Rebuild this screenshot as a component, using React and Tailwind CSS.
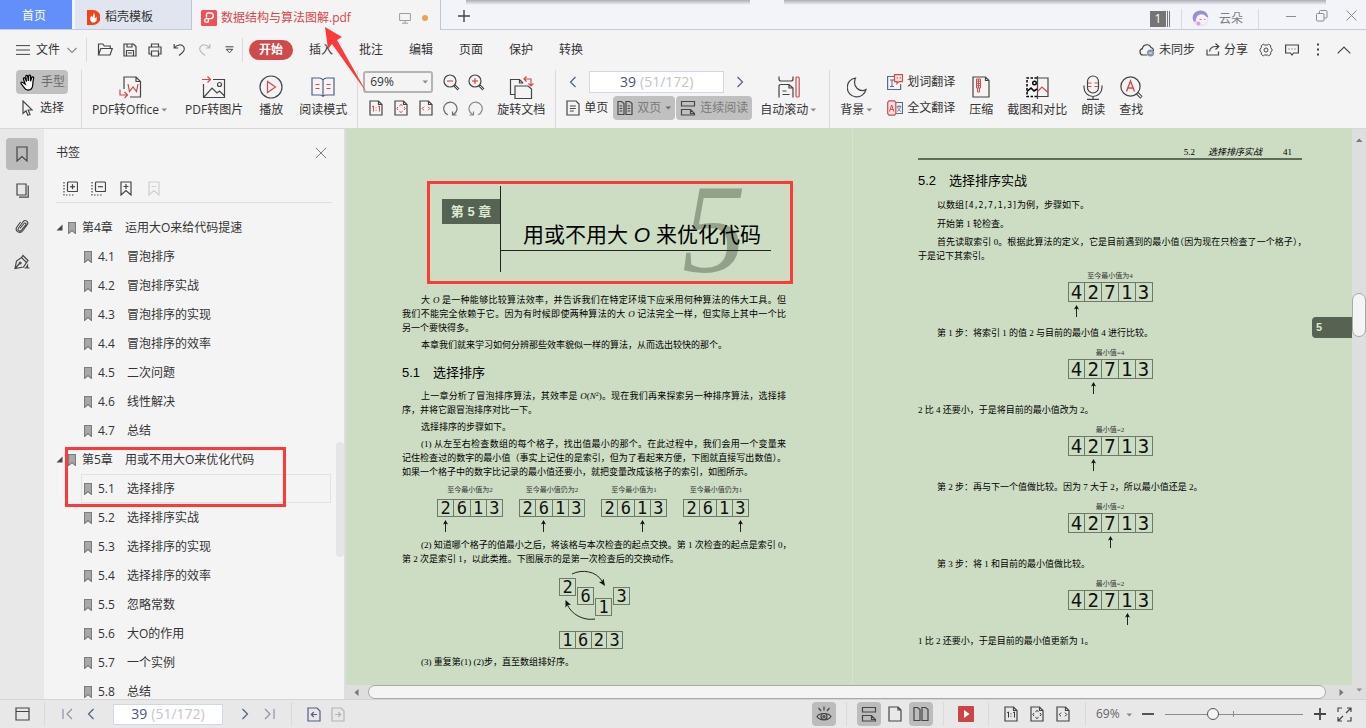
import React from "react";
import clsx from "clsx";

/* ---------- icon helpers ---------- */

const Svg = ({ w = 16, h = 16, className = "text-[#454545]", children }) => (
  <svg
    width={w}
    height={h}
    viewBox={`0 0 ${w} ${h}`}
    fill="none"
    stroke="currentColor"
    strokeWidth="1.2"
    className={clsx("shrink-0", className)}
    aria-hidden="true"
  >
    {children}
  </svg>
);

const RED = "#d34a4a";

const Caret = ({ className = "text-[#8a8a8a]" }) => (
  <Svg w={7} h={4} className={className}>
    <path d="M0.5 0.5h5.6L3.3 3.6z" fill="currentColor" stroke="none" />
  </Svg>
);

const Chevron = ({ dir, className }) => (
  <Svg w={12} h={12} className={className || "text-[#4f5f86]"}>
    {dir === "left" && <path d="M8.5 1 3.5 6l5 5" />}
    {dir === "right" && <path d="M3.5 1l5 5-5 5" />}
    {dir === "down" && <path d="M1.5 4 6 8.5 10.5 4" />}
  </Svg>
);

// page with a folded corner, used by all the zoom-fit buttons
const FitIcon = ({ kind, color = RED }) => (
  <Svg w={14} h={16} className="text-[#454545]">
    <path d="M1 1h8.5L13 4.5V15H1zM9.5 1v3.5H13" />
    {kind === "actual" && (
      <path d="M3.2 6.6 4.5 6v5.5M9.2 6.6l1.3-.6v5.5M7 7.4v.9M7 9.8v.9" stroke={color} strokeWidth="1" />
    )}
    {kind === "page" && (
      <path d="M5.4 5.8 7 4.5l1.6 1.3M5.4 11.2 7 12.5l1.6-1.3M4 7 2.9 8.5 4 10M10 7l1.1 1.5L10 10" stroke={color} strokeWidth="1" />
    )}
    {kind === "width" && <path d="M5 6.7 3.2 8.5 5 10.3M9 6.7l1.8 1.8L9 10.3" stroke={color} strokeWidth="1" />}
  </Svg>
);

const SinglePage = () => (
  <Svg w={14} h={16}>
    <path d="M1 1h9l3 3v11H1zM3.8 6h6M3.8 8.5h6M3.8 11h4" />
  </Svg>
);

const DoublePage = ({ plain }) => (
  <Svg w={16} h={16}>
    <path d="M1 1.5h3.5l2.5 2v11H1zM9 1.5h3.5l2.5 2v11H9z" />
    {!plain && <path d="M2.6 6h2.6M2.6 8.5h2.6M2.6 11h2.6M10.6 6h2.6M10.6 8.5h2.6M10.6 11h2.6" strokeWidth="1" />}
  </Svg>
);

const Continuous = () => (
  <Svg w={16} h={16}>
    <path d="M1.5 1.5h13v4.5h-13zM1.5 15.5V9.5h9l4 4v2M10.5 9.5v4h4M1.5 15h13" />
  </Svg>
);

const BookmarkGlyph = () => (
  <Svg w={8} h={12} className="text-[#7d7d7d]">
    <path d="M.5.5h7v11L4 8.5.5 11.5z" fill="#a9a9a9" />
  </Svg>
);

const Sep = ({ className }) => <div className={clsx("w-px bg-[#dadada] shrink-0", className)} />;

const IconButton = ({ label, active, className, children }) => (
  <button
    type="button"
    aria-label={label}
    className={clsx(
      "h-6 shrink-0 flex items-center justify-center rounded",
      active && "bg-[#bcbcbc]",
      className || "w-6"
    )}
  >
    {children}
  </button>
);

const BigButton = ({ label, caret, children }) => (
  <button type="button" className="flex flex-col items-center shrink-0 pt-1 whitespace-nowrap">
    <span className="h-[26px] flex items-center justify-center">{children}</span>
    <span className="mt-[2px] leading-4 flex items-center gap-[2px]">
      {label}
      {caret && <Caret />}
    </span>
  </button>
);

const PageBox = ({ className }) => (
  <label
    className={clsx(
      "bg-white border border-[#cfd8e8] flex items-center justify-center gap-1 text-sm shrink-0",
      className
    )}
  >
    <input aria-label="页码" defaultValue="39" className="w-4 text-[#45557d] bg-transparent outline-none" />
    <span className="text-[#c4c4c8]">(51/172)</span>
  </label>
);

/* ---------- title bar ---------- */

const TitleBar = () => (
  <div className="relative flex h-[30px] bg-[#f3f4f9] border-b border-[#c3cade] shrink-0">
    {/* shadows cast by the windows above */}
    <div className="absolute left-[466px] w-[284px] top-0 h-[5px] bg-gradient-to-b from-[#adaeb3] to-transparent" />
    <div className="absolute left-[784px] right-[40px] top-0 h-[5px] bg-gradient-to-b from-[#adaeb3] to-transparent" />
    <button type="button" className="w-[72px] h-[29px] bg-[#628ffa] text-white pr-1 pt-[3px]">首页</button>
    <button type="button" className="ml-[3px] w-[116px] bg-[#e1e5ef] flex items-center pl-3 gap-[5px] pt-[5px]">
      <Svg w={13} h={15} className="">
        <path d="M0 0h6a7.5 7.5 0 0 1 0 15H0z" fill="#f4431c" stroke="none" />
        <path d="M6.6 2.5c.5 2.5-1.3 3.4-.9 5C4.9 7 4.5 6.3 4.4 5.6 2.5 8 2.7 11 5.3 12.5c4 .6 5.4-2.8 4-6-.4 1-1 1.5-1.7 1.8C8.3 6 8 4 6.6 2.5z" fill="#fff" stroke="none" />
      </Svg>
      稻壳模板
    </button>
    <div className="h-[30px] w-[250px] bg-[#f4f4f4] border-x border-[#bcc5da] flex items-center pl-[9px] pt-[5px]">
      <Svg w={16} h={16} className="">
        <rect width="16" height="16" rx="1.5" fill="#ee5156" stroke="none" />
        <path d="M5.5 7.5V4.5A1.5 1.5 0 0 1 7 3h2.5a2.7 2.7 0 0 1 0 5.600H5.500a1.900 1.900 0 1 0 1.900 1.900V8.700" stroke="#fff" strokeWidth="1.4" />
      </Svg>
      <span className="ml-1 text-[#d8464a] whitespace-nowrap">数据结构与算法图解.pdf</span>
      <Svg w={12} h={12} className="ml-auto text-[#9c9c9c]">
        <path d="M.6 1.5h10.8v7H.6zM6 8.5v2.5M3 11.2h6" strokeWidth="1" />
      </Svg>
      <span className="ml-[11px] mr-3 size-[6px] rounded-full bg-[#e9a15c]" />
    </div>
    <button type="button" aria-label="新建标签" className="w-[46px] flex items-center justify-center pt-[3px]">
      <Svg w={12} h={12}><path d="M6 0v12M0 6h12" strokeWidth="1.4" /></Svg>
    </button>

    <div className="ml-auto flex items-center text-[#7b7f88] pt-2">
      <span className="w-4 h-4 bg-[#757575] text-white text-center leading-4">1</span>
      <span className="ml-px w-[3px] h-4 border-x border-[#757575]" />
      <Sep className="h-5 ml-[11px] bg-[#cdcfd6]" />
      <Svg w={17} h={17} className="ml-[10px]">
        <circle cx="8.5" cy="8.5" r="8" fill="#e9e3f3" stroke="none" />
        <path d="M.8 9C0 4 4 .5 8.5.5s7.5 3 7.7 7C13 7 12 5 9.5 4.6 6 4.3 4 6 3.5 12 2 11.5 1 10.5.8 9z" fill="#9a8fc9" stroke="none" />
        <circle cx="10" cy="9.5" r="5" fill="#fff4f2" stroke="none" />
        <path d="M7.5 9.5h2M12 9.5h1.5" stroke="#7d6a91" strokeWidth=".8" />
        <circle cx="6.5" cy="13.5" r="2" fill="#e59be0" stroke="none" />
      </Svg>
      <span className="ml-[10px]">云朵</span>
      <Sep className="h-5 ml-[15px] bg-[#cdcfd6]" />
    </div>
    <div className="flex items-center text-[#8b8b93] pl-4 pt-[2px]">
      <IconButton label="最小化" className="w-[31px]">
        <Svg w={10} h={10} className=""><path d="M0 5.5h10" strokeWidth="1" /></Svg>
      </IconButton>
      <IconButton label="还原" className="w-[31px]">
        <Svg w={12} h={12} className="">
          <rect x=".5" y="3.5" width="7.5" height="7.5" rx="1" strokeWidth="1" />
          <path d="M3.5 3.5v-2a1 1 0 0 1 1-1H10a1 1 0 0 1 1 1V7a1 1 0 0 1-1 1H8" strokeWidth="1" />
        </Svg>
      </IconButton>
      <IconButton label="关闭" className="w-[29px]">
        <Svg w={11} h={11} className=""><path d="M.5.5l10 10M10.5.5l-10 10" strokeWidth="1" /></Svg>
      </IconButton>
    </div>
  </div>
);

/* ---------- menu row ---------- */

const menus = ["插入", "批注", "编辑", "页面", "保护", "转换"];

const MenuRow = () => (
  <div className="flex items-center h-[38px] shrink-0 pl-4 pr-[9px] pt-px">
    <button type="button" className="flex items-center gap-[6px]">
      <Svg w={14} h={10}><path d="M0 .6h14M0 5h14M0 9.4h14" strokeWidth="1" /></Svg>
      文件
      <Chevron dir="down" className="text-[#8a8a8a]" />
    </button>
    <Sep className="h-6 ml-2 mr-[5px]" />
    <IconButton label="打开" className="w-[25px]">
      <Svg w={16} h={13}><path d="M1.5 12V1h4.3l1.5 2h6v2.5M1.5 12l2.3-6.5h11.5L13 12z" /></Svg>
    </IconButton>
    <IconButton label="保存" className="w-[25px]">
      <Svg w={14} h={14}><path d="M1 1h9.5L13 3.5V13H1zM4 1v3h5V1M3.5 13V7.5h7V13M5 10h4" /></Svg>
    </IconButton>
    <IconButton label="打印" className="w-[25px]">
      <Svg w={14} h={14}><path d="M3.5 4V1h7v3M3.5 11H1V4h12v7h-2.5M3.5 8h7v5h-7zM10.2 6h1" /></Svg>
    </IconButton>
    <IconButton label="撤销" className="w-[25px]">
      <Svg w={13} h={13}><path d="M1.2 1v4h4M1.4 4.8C4 1.5 8.5 1 10.5 3.5c2.5 3.5-1 6.5-4.5 9" /></Svg>
    </IconButton>
    <IconButton label="重做" className="w-[25px]">
      <Svg w={13} h={13} className="text-[#b9b9b9]"><path d="M11.8 1v4h-4M11.6 4.8C9 1.5 4.5 1 2.5 3.5c-2.5 3.5 1 6.5 4.5 9" /></Svg>
    </IconButton>
    <IconButton label="更多" className="w-[25px]">
      <Svg w={9} h={8}><path d="M.5.8h8M1.2 3.3h6.6L4.5 6.8z" strokeWidth="1" /></Svg>
    </IconButton>
    <Sep className="h-6 mr-[3px]" />
    <nav className="flex">
      <button type="button" className="w-11 h-5 mx-[3px] rounded-full bg-[#cf4b4b] text-white font-bold">开始</button>
      {menus.map((m) => (
        <button key={m} type="button" className="w-[50px] h-5">{m}</button>
      ))}
    </nav>
    <div className="ml-auto flex items-center">
      <button type="button" className="flex items-center gap-1">
        <Svg w={16} h={14}>
          <path d="M8 12H4a3.2 3.2 0 0 1-.6-6.3A4.5 4.5 0 0 1 12 4.500a3.500 3.500 0 0 1 2.500 3.500" />
          <circle cx="11.5" cy="10" r="3.6" fill="#8791a8" stroke="none" />
          <path d="M9.7 10h3.6" stroke="#fff" strokeWidth="1" />
        </Svg>
        未同步
      </button>
      <button type="button" className="flex items-center gap-1 ml-[11px] mr-[5px]">
        <Svg w={14} h={13}><path d="M1 6.5V12h11.5V8.5M3.5 8.5C4 5.5 6 3.5 9.5 3.5h3M9.5.5l3.3 3-3.3 3" /></Svg>
        分享
      </button>
      <IconButton label="设置" className="w-[26px]">
        <Svg w={14} h={14}>
          <path d="M4.3 1.2 5.5 2h3l1.2-.8 2 1.5v1.8L13.3 7l-1.6 2.5v1.8l-2 1.5L8.5 12h-3l-1.2.8-2-1.5V9.5L.7 7l1.6-2.5V2.7z" strokeWidth="1" />
          <circle cx="7" cy="7" r="2" strokeWidth="1" />
        </Svg>
      </IconButton>
      <IconButton label="反馈" className="w-[26px]">
        <Svg w={14} h={12}><path d="M.6 1h12.8v8H8.5L7 11 5.5 9H.6z" /><path d="M3.5 5h1M6.5 5h1M9.5 5h1" /></Svg>
      </IconButton>
      <IconButton label="选项" className="w-[26px]">
        <Svg w={2} h={13}><path d="M0 1.5h2M0 6.5h2M0 11.5h2" strokeWidth="2" /></Svg>
      </IconButton>
      <IconButton label="收起" className="w-[26px]">
        <Svg w={14} h={8}><path d="M.7 7.3 7 1l6.3 6.3" /></Svg>
      </IconButton>
    </div>
  </div>
);

/* ---------- toolbar ---------- */

const Magnifier = ({ plus }) => (
  <Svg w={17} h={17}>
    <circle cx="7" cy="7" r="6" />
    <path d="M4 7h6" stroke={RED} />
    {plus && <path d="M7 4v6" stroke={RED} />}
    <path d="M11.5 11.5l4 4" strokeWidth="2.6" />
    <path d="M12 12l3.5 3.5" stroke="#f4f4f4" strokeWidth=".8" />
  </Svg>
);

const Toolbar = () => (
  <div className="flex h-[60px] shrink-0 pl-4 pt-[2px] overflow-hidden">
    <div className="flex flex-col gap-[2px] w-[52px]">
      <button type="button" className="h-6 rounded bg-[#c0c0c0] text-[#6b6b6b] flex items-center gap-1 pl-1">
        <Svg w={17} h={17} className="text-black">
          <path d="M5.2 10 3.5 5.2c-.4-1.3 1.3-1.9 1.8-.6L6.5 7.5 5.8 2.5c-.1-1.4 1.7-1.6 1.9-.2L8.4 7l.4-5c.1-1.3 1.9-1.2 1.8.1L10.5 7.2l1.3-3.7c.5-1.2 2.1-.7 1.8.6-.5 2.5-.9 4.5-.9 7-.1 3-1.9 5-4.7 5-2.5 0-3.5-1.6-4.5-3.3L1.2 9.6C.5 8.3 2 7.5 2.9 8.5z" fill="#fff" />
        </Svg>
        手型
      </button>
      <button type="button" className="h-6 flex items-center gap-[7px] pl-[6px]">
        <Svg w={11} h={16}><path d="M1 1v12.5l3-2.7 1.8 4.4 2.2-.9-1.8-4.3h4z" /></Svg>
        选择
      </button>
    </div>
    <Sep className="h-[58px] ml-[13px] mr-[10px]" />

    <div className="flex gap-4 h-[58px]">
      <div className="flex mr-px">
        <BigButton label="PDF转Office" caret>
          <Svg w={23} h={23}>
            <path d="M5 13V1h12l4.5 4.5V21H11M17 1v4.5h4.5" />
            <path d="M9 8l1.5 7.5L14 11l3.5 4.5L19 8M1 13.5V19h7M5.5 16l3 3-3 3" stroke={RED} />
          </Svg>
        </BigButton>
      </div>
      <BigButton label="PDF转图片">
        <Svg w={24} h={23}>
          <path d="M1.5 8v13.5h21v-18H11M2 21l8-9 5 5 2.5-2 5 5" />
          <circle cx="17.5" cy="8.5" r="2" />
          <path d="M0 3.5h8M5.5.5l3 3-3 3" stroke={RED} />
        </Svg>
      </BigButton>
      <BigButton label="播放">
        <Svg w={24} h={24}><circle cx="12" cy="12" r="11" /><path d="M8.5 6.5v11l8-5.5z" stroke={RED} /></Svg>
      </BigButton>
      <BigButton label="阅读模式">
        <Svg w={24} h={20} className="text-[#4f5f86]">
          <path d="M12 3C11 1.5 9.5 1 8 1H1v17h7.5c1.5 0 2.5.3 3.5 1.3 1-1 2-1.3 3.5-1.3H23V1h-7c-1.5 0-3 .5-4 2zM12 3v16" />
          <path d="M4.5 7.5h4M4.5 11.5h4M15.5 7.5h4M15.5 11.5h4" stroke={RED} />
        </Svg>
      </BigButton>
    </div>
    <Sep className="h-[58px] ml-[10px] mr-[5px]" />

    <div className="flex flex-col gap-[2px]">
      <div className="flex items-center h-6">
        <div className="relative w-[70px] h-[22px]">
          <select aria-label="缩放" className="appearance-none w-full h-full rounded-[3px] border-2 border-[#b4b4b4] bg-[#f4f4f4] pl-[5px] text-xs">
            <option>69%</option>
          </select>
          <span className="absolute right-1 top-[9px] pointer-events-none"><Caret /></span>
        </div>
        <IconButton label="缩小" className="w-[25px] ml-[6px]"><Magnifier /></IconButton>
        <IconButton label="放大" className="w-[25px]"><Magnifier plus /></IconButton>
      </div>
      <div className="flex">
        <IconButton label="实际大小" className="w-[25px]"><FitIcon kind="actual" /></IconButton>
        <IconButton label="适合页面" className="w-[25px]"><FitIcon kind="page" /></IconButton>
        <IconButton label="适合宽度" className="w-[25px]"><FitIcon kind="width" /></IconButton>
        <IconButton label="顺时针旋转" className="w-[25px]">
          <Svg w={15} h={15} className="text-[#6a6a6a]"><path d="M5 13.8a6.6 6.6 0 1 1 5-.1M9.5 10.5v3.5h4" /></Svg>
        </IconButton>
        <IconButton label="逆时针旋转" className="w-[25px]">
          <Svg w={15} h={15} className="text-[#8a8a8a]"><path d="M10 13.8a6.6 6.6 0 1 0-5-.1M5.5 10.5v3.5h-4" /></Svg>
        </IconButton>
      </div>
    </div>
    <div className="flex ml-2 h-[58px]">
      <BigButton label="旋转文档">
        <Svg w={25} h={25}>
          <path d="M6 19.5H1.5v-15h9L14 8" />
          <path d="M6 11h13l3.5 3v9.5H6zM10.5 4.5V8H14" />
          <path d="M15.5 4H22v6M17.5 1.5 15 4l2.5 2.5M19.5 8.5 22 11l2.5-2.5" stroke={RED} />
        </Svg>
      </BigButton>
    </div>
    <Sep className="h-[58px] ml-[10px] mr-[5px]" />

    <div className="flex flex-col gap-[2px]">
      <div className="flex items-center h-6">
        <IconButton label="上一页"><Chevron dir="left" /></IconButton>
        <PageBox className="w-[135px] h-[22px] ml-1 mr-1" />
        <IconButton label="下一页"><Chevron dir="right" /></IconButton>
      </div>
      <div className="flex h-6">
        <button type="button" className="flex items-center gap-1 px-[5px]"><SinglePage />单页</button>
        <button type="button" className="flex items-center gap-1 pl-1 pr-[3px] rounded bg-[#c0c0c0] text-[#7a7a7a]">
          <DoublePage />双页<Caret className="text-[#6a6a6a]" />
        </button>
        <button type="button" className="flex items-center gap-1 px-1 ml-px rounded bg-[#c0c0c0] text-[#7a7a7a]">
          <Continuous />连续阅读
        </button>
      </div>
    </div>
    <div className="flex ml-2 h-[58px]">
      <BigButton label="自动滚动" caret>
        <Svg w={22} h={22}>
          <path d="M1 .5v2.5c0 1 .5 2 2 2h10c1.5 0 2-1 2-2V.5M1 21.5V10.5c0-1.5.5-2 2-2h8l4 3.5v9.5M11 8.5V12h4M4.5 15h4M4.5 18.5h7" />
          <rect x="18" y="1" width="3.2" height="20" rx="1" stroke={RED} />
        </Svg>
      </BigButton>
    </div>
    <Sep className="h-[58px] ml-3 mr-[10px]" />

    <div className="flex gap-[14px] h-[58px]">
      <BigButton label="背景" caret>
        <Svg w={20} h={21}><path d="M8.5 1a9.5 9.5 0 1 0 10.5 11.5C12.5 16 5 9.5 8.5 1z" /></Svg>
      </BigButton>
      <div className="flex flex-col gap-[2px]">
        <button type="button" className="h-6 flex items-center gap-1">
          <Svg w={16} h={16}>
            <path d="M8 2.5H.6v13h13V10" stroke="#5b6a8c" />
            <path d="M3 6h4M3 12.5h4M5 6v6.5" stroke="#5b6a8c" strokeWidth="1" />
            <path d="M7.5.6h8v7H12l-2 2v-2H7.5z" stroke={RED} fill="#fbe3e3" />
            <path d="M9.5 4h1.5M12.5 4H14" stroke={RED} />
          </Svg>
          划词翻译
        </button>
        <button type="button" className="h-6 flex items-center gap-1">
          <Svg w={16} h={16}>
            <path d="M8.5 2.5h7v11h-7" stroke="#5b6a8c" />
            <path d="M9.8 6.5h4.4M12 5v1.5M10 11.5c2-1 3-2.5 3.5-5M10.5 7c.5 2 1.5 3.5 3.5 4.5" stroke="#5b6a8c" strokeWidth=".8" />
            <path d="M2 .8h5.5l1.3 1.7v11l-1.3 1.7H2L.7 13.5v-11z" stroke={RED} fill="#fbe3e3" />
            <path d="M2.5 11.5 4.7 5l2.2 6.5M3.3 9.3h2.9" stroke={RED} strokeWidth="1" />
          </Svg>
          全文翻译
        </button>
      </div>
      <BigButton label="压缩">
        <Svg w={18} h={22}>
          <path d="M1 1h12.5L17 4.5V21H1zM13.5 1v3.5H17" />
          <path d="M4.5 3h4v9h-4zM6.5 3v9M4.5 5.2h4M4.5 7.5h4M4.5 9.7h4M5.5 12v4h2v-4" stroke={RED} strokeWidth="1" />
        </Svg>
      </BigButton>
      <BigButton label="截图和对比">
        <Svg w={23} h={23}>
          <path d="M11 2H1v18.5h10" stroke="#000" strokeDasharray="2.5 1.5" strokeWidth="1.5" />
          <path d="M1 15.5 5 12l3 3 3-2" stroke="#000" strokeWidth="1.6" />
          <circle cx="8.5" cy="7" r="1.8" stroke="#000" strokeWidth="1.4" />
          <path d="M11.5 0v23M11.5 2H22v18.5H11.5" />
          <path d="M11.5 15.5 16 11l6 5.5" stroke={RED} />
        </Svg>
      </BigButton>
      <BigButton label="朗读">
        <Svg w={20} h={25}>
          <rect x="4.5" y="1" width="11" height="17" rx="5.5" />
          <path d="M1 10.5v2a9 9 0 0 0 18 0v-2M10 21.5V24M4 24.3h12" />
          <path d="M5 8h3.5M5 11.5h3.5M11.5 8H15M11.5 11.5H15" stroke={RED} />
        </Svg>
      </BigButton>
      <BigButton label="查找">
        <Svg w={23} h={23}>
          <circle cx="10.5" cy="10.5" r="9.6" />
          <path d="M6.5 15.5 10.5 5l4 10.5M8 12h5" stroke={RED} strokeWidth="1.4" />
          <path d="M17 17l4.5 4.5" strokeWidth="3.2" />
          <path d="M17.7 17.7l3.3 3.3" stroke="#f4f4f4" strokeWidth="1.2" />
        </Svg>
      </BigButton>
    </div>
  </div>
);

/* ---------- sidebar ---------- */

const chapters = [
  {
    no: "第4章",
    title: "运用大O来给代码提速",
    items: [
      ["4.1", "冒泡排序"],
      ["4.2", "冒泡排序实战"],
      ["4.3", "冒泡排序的实现"],
      ["4.4", "冒泡排序的效率"],
      ["4.5", "二次问题"],
      ["4.6", "线性解决"],
      ["4.7", "总结"],
    ],
  },
  {
    no: "第5章",
    title: "用或不用大O来优化代码",
    items: [
      ["5.1", "选择排序"],
      ["5.2", "选择排序实战"],
      ["5.3", "选择排序的实现"],
      ["5.4", "选择排序的效率"],
      ["5.5", "忽略常数"],
      ["5.6", "大O的作用"],
      ["5.7", "一个实例"],
      ["5.8", "总结"],
    ],
  },
];

const Rail = () => (
  <div className="w-11 bg-[#e8e8e8] shrink-0 flex flex-col items-center pt-[9px]">
    <button type="button" aria-label="书签" className="size-8 rounded bg-[#bababa] flex items-center justify-center">
      <Svg w={12} h={16}><path d="M1 1h10v14l-5-4.5L1 15z" /></Svg>
    </button>
    <button type="button" aria-label="缩略图" className="w-8 h-9 mt-[2px] flex items-center justify-center">
      <Svg w={13} h={15}><path d="M1 1h9v11H1zM12.2 2.5v11.7H3" /></Svg>
    </button>
    <button type="button" aria-label="附件" className="w-8 h-9 flex items-center justify-center">
      <Svg w={14} h={16}>
        <path d="M5 10.5 9 5.5c1-1.2 2.7 0 1.8 1.3L6.5 12.2c-1.8 2-4.5 0-3-2.2L8 3.8c2.2-2.8 6.2 0 4.2 3L8 12.5c-3 4-8.5.8-6.3-3.3L5.5 4" strokeWidth="1.1" />
      </Svg>
    </button>
    <button type="button" aria-label="签名" className="w-8 h-9 flex items-center justify-center">
      <Svg w={16} h={16}>
        <path d="M1 14.5 2.5 7l5-3.5 5 5L9.5 13 1 14.5zM1 14.5l4.5-5M7.5 3.5 9 1.5l5 5-1.5 2M10.5 14h1.5l1.5-2.5v2.5h2" />
        <circle cx="6.2" cy="9" r=".9" />
      </Svg>
    </button>
  </div>
);

const Sidebar = () => (
  <aside className="relative w-[302px] shrink-0 border-r-2 border-[#dcdee0] bg-[#f4f4f4] flex flex-col overflow-hidden">
    <div className="flex items-center justify-between shrink-0 pl-3 pr-[17px] pt-2 h-10">
      <h2>书签</h2>
      <button type="button" aria-label="关闭书签">
        <Svg w={12} h={12} className="text-[#7d7d7d]"><path d="M.8.8l10.4 10.4M11.2.8.8 11.2" strokeWidth="1" /></Svg>
      </button>
    </div>
    <div className="flex items-center shrink-0 mx-3 mt-[5px] h-[29px] border-b border-[#dedede]">
      {["展开", "收起"].map((t, i) => (
        <IconButton key={t} label={t} className="w-7">
          <Svg w={15} h={15}>
            <rect x="4.5" y="1" width="10" height="9.5" rx="1" />
            <path d="M7 5.7h5" />
            {i === 0 && <path d="M9.5 3.2v5" />}
            <path d="M1 1v13h10" strokeDasharray="1.5 1.5" />
          </Svg>
        </IconButton>
      ))}
      <IconButton label="添加书签" className="w-7">
        <Svg w={12} h={15}><path d="M1 1h10v13l-5-4.5L1 14zM3.5 5.5h5M6 3v5" /></Svg>
      </IconButton>
      <IconButton label="删除书签" className="w-7">
        <Svg w={12} h={15} className="text-[#cfcfcf]"><path d="M1 1h10v13l-5-4.5L1 14zM3.5 5.5h5" /></Svg>
      </IconButton>
    </div>

    <nav className="shrink-0 pt-[10px] pr-[13px]">
      {chapters.map((c) => (
        <div key={c.no}>
          <a href="#" className="flex items-center h-[29px] pl-3">
            <Svg w={7} h={7}><path d="M6.5.5v6h-6z" fill="currentColor" stroke="none" /></Svg>
            <span className="ml-[5px] mr-[6px]"><BookmarkGlyph /></span>
            <span className="w-[43px]">{c.no}</span>
            {c.title}
          </a>
          {c.items.map(([no, title]) => (
            <a
              key={no}
              href="#"
              className={clsx(
                "flex items-center h-[29px] ml-[37px] pl-[2px] border",
                no === "5.1" ? "border-[#e2e2e2]" : "border-transparent"
              )}
            >
              <BookmarkGlyph />
              <span className="ml-[6px] w-[29px]">{no}</span>
              {title}
            </a>
          ))}
        </div>
      ))}
    </nav>

    <div className="absolute right-0 top-[313px] w-2 h-[115px] rounded-full bg-[#e4e5e7]" />
    <div className="absolute left-[21px] top-[318px] w-[221px] h-[60px] border-3 border-[#fb3a3a]" />
  </aside>
);

/* ---------- document ---------- */

const UpArrow = () => (
  <svg width="7" height="12" viewBox="0 0 7 12" aria-hidden="true">
    <path d="M3.5 12V2" stroke="#222" />
    <path d="M3.5 0 6 4.5 3.5 3.5 1 4.5z" fill="#111" />
  </svg>
);

const Cells = ({ values, className }) => (
  <div
    className={clsx(
      "flex border border-[#6d7a68] divide-x divide-[#6d7a68] text-[#111] [font-family:'DejaVu_Sans_Mono',monospace]",
      className
    )}
  >
    {values.map((v, i) => (
      <span key={i} className="flex-1 text-center">{v}</span>
    ))}
  </div>
);

const ArrayFigure = ({ label, values, at, small }) => (
  <figure className={clsx("flex flex-col", small ? "w-[66px]" : "w-[85px] mx-auto mt-2 mb-[9px]")}>
    <figcaption
      className={clsx(
        "self-center whitespace-nowrap text-[7px] leading-[10px] text-[#333]",
        small ? "mb-1" : "mb-px"
      )}
    >
      {label}
    </figcaption>
    <Cells values={values} className={small ? "h-[18px] text-[17px] leading-4" : "h-5 text-[19px] leading-[18px]"} />
    <div className="flex mt-[3px]">
      {values.map((_, i) => (
        <span key={i} className="flex-1 h-3 flex justify-center">{i === at && <UpArrow />}</span>
      ))}
    </div>
  </figure>
);

// book typesetting: every line but the last is justified to the column
const Para = ({ lines, flush, className = "mb-[3px]" }) => (
  <p className={className}>
    {lines.map((line, i) => (
      <span
        key={i}
        className={clsx(
          "block whitespace-nowrap",
          i === 0 && !flush && "indent-[19px]",
          i < lines.length - 1 && "[text-align-last:justify]"
        )}
      >
        {line}
      </span>
    ))}
  </p>
);

const SectionTitle = ({ children, className }) => (
  <h3
    className={clsx(
      "text-[13px] leading-5 [font-family:'Liberation_Sans','Noto_Sans_CJK_SC',sans-serif]",
      className
    )}
  >
    {children}
  </h3>
);

const swapBoxes = [
  ["2", 1, 10],
  ["6", 19, 19],
  ["1", 37, 30],
  ["3", 55, 19],
];

const LeftPage = () => (
  <article className="border-r border-[#d6e4cd] pl-14 pt-[57px]">
    <div className="w-[384px]">
      <header className="relative flex ml-10 h-[86px]">
        <span className="absolute left-[240px] top-[-7px] text-[128px] leading-[100px] italic text-[#93a18b] [font-family:'Liberation_Serif',serif]">5</span>
        <div className="relative w-[59px] border-r border-[#222] pt-[13px]">
          <div className="h-[25px] bg-[#566252] text-[#dbe8d2] text-[13px] font-bold leading-[25px] text-center [font-family:'Liberation_Sans','Noto_Sans_CJK_SC',sans-serif]">第 5 章</div>
        </div>
        <h1 className="relative h-[65px] w-[270px] border-b border-[#222] pt-[34px] pl-[22px] text-[21px] leading-[30px] whitespace-nowrap [font-family:'Liberation_Sans','Noto_Sans_CJK_SC',sans-serif]">
          用或不用大 <i>O</i> 来优化代码
        </h1>
        <div className="absolute left-[-15px] top-[-5px] w-[366px] h-[103px] border-3 border-[#fb3a3a]" />
      </header>

      <div className="mt-[21px]">
        <Para
          lines={[
            <>大 <i>O</i> 是一种能够比较算法效率，并告诉我们在特定环境下应采用何种算法的伟大工具。但</>,
            <>我们不能完全依赖于它。因为有时候即使两种算法的大 <i>O</i> 记法完全一样，但实际上其中一个比</>,
            "另一个要快得多。",
          ]}
        />
        <Para lines={["本章我们就来学习如何分辨那些效率貌似一样的算法，从而选出较快的那个。"]} />
        <SectionTitle className="mt-[11px] mb-[6px]">5.1　选择排序</SectionTitle>
        <Para
          lines={[
            <>上一章分析了冒泡排序算法，其效率是 <i>O</i>(<i>N</i><sup className="text-[6px]">2</sup>)。现在我们再来探索另一种排序算法，选择排</>,
            "序，并将它跟冒泡排序对比一下。",
          ]}
        />
        <Para lines={["选择排序的步骤如下。"]} />
        <Para
          lines={[
            "(1) 从左至右检查数组的每个格子，找出值最小的那个。在此过程中，我们会用一个变量来",
            "记住检查过的数字的最小值（事实上记住的是索引，但为了看起来方便，下图就直接写出数值）。",
            "如果一个格子中的数字比记录的最小值还要小，就把变量改成该格子的索引，如图所示。",
          ]}
        />
        <div className="flex gap-4 pl-[35px] mt-[6px] mb-[6px]">
          <ArrayFigure small label="至今最小值为2" values={[2, 6, 1, 3]} at={0} />
          <ArrayFigure small label="至今最小值仍为2" values={[2, 6, 1, 3]} at={1} />
          <ArrayFigure small label="至今最小值为1" values={[2, 6, 1, 3]} at={2} />
          <ArrayFigure small label="至今最小值仍为1" values={[2, 6, 1, 3]} at={3} />
        </div>
        <Para
          className=""
          lines={[
            "(2) 知道哪个格子的值最小之后，将该格与本次检查的起点交换。第 1 次检查的起点是索引 0，",
            "第 2 次是索引 1，以此类推。下图展示的是第一次检查后的交换动作。",
          ]}
        />
        <div className="pl-[156px] pt-[2px]">
          <svg width="74" height="54" viewBox="0 0 74 54" fill="none">
            {swapBoxes.map(([n, x, y]) => (
              <g key={n}>
                <rect x={x + 0.5} y={y + 0.5} width="16" height="17" stroke="#6d7a68" />
                <text x={x + 8.5} y={y + 15} textAnchor="middle" fill="#111" className="text-[17px] [font-family:'DejaVu_Sans_Mono',monospace]">{n}</text>
              </g>
            ))}
            <path d="M14 6C24 1 38 3 44 13" stroke="#222" />
            <path d="M47 18l-6-4 3-.5 1.5-3z" fill="#111" />
            <path d="M37 51C25 53 13 46 9 36" stroke="#222" />
            <path d="M7.5 32l5.5 5-3.5-.3-2 3z" fill="#111" />
          </svg>
          <Cells values={[1, 6, 2, 3]} className="ml-px mt-[9px] mb-[6px] w-16 h-[18px] text-[17px] leading-4" />
        </div>
        <Para lines={["(3) 重复第(1) (2)步，直至数组排好序。"]} />
      </div>
    </div>
  </article>
);

const RightPage = () => (
  <article className="relative pl-[65px] pt-[17px]">
    <div className="w-[384px]">
      <header className="flex justify-end gap-[13px] pr-[10px] leading-[12px] border-b-2 border-[#5f6c5a] italic">
        <span className="not-italic">5.2</span>
        <span>选择排序实战</span>
        <span className="not-italic ml-[8px]">41</span>
      </header>
      <SectionTitle className="mt-[11px] mb-[7px]">5.2　选择排序实战</SectionTitle>
      <Para
        className="mb-1"
        lines={[
          <>以数组<span className="text-[8px] [font-family:'DejaVu_Sans_Mono',monospace]">[4,2,7,1,3]</span>为例，步骤如下。</>,
        ]}
      />
      <Para className="mb-1" lines={["开始第 1 轮检查。"]} />
      <Para
        className=""
        lines={[
          <>
            首先读取索引 0。根据此算法的定义，它是目前遇到的最小值
            <span className="[font-feature-settings:'halt']">（</span>因为现在只检查了一个格子
            <span className="[font-feature-settings:'halt']">），</span>
          </>,
          "于是记下其索引。",
        ]}
      />
      <ArrayFigure label="至今最小值为4" values={[4, 2, 7, 1, 3]} at={0} />
      <Para className="" lines={["第 1 步：将索引 1 的值 2 与目前的最小值 4 进行比较。"]} />
      <ArrayFigure label="最小值=4" values={[4, 2, 7, 1, 3]} at={1} />
      <Para className="" flush lines={["2 比 4 还要小，于是将目前的最小值改为 2。"]} />
      <ArrayFigure label="最小值=2" values={[4, 2, 7, 1, 3]} at={1} />
      <Para className="" lines={["第 2 步：再与下一个值做比较。因为 7 大于 2，所以最小值还是 2。"]} />
      <ArrayFigure label="最小值=2" values={[4, 2, 7, 1, 3]} at={2} />
      <Para className="" lines={["第 3 步：将 1 和目前的最小值做比较。"]} />
      <ArrayFigure label="最小值=2" values={[4, 2, 7, 1, 3]} at={3} />
      <Para className="" flush lines={["1 比 2 还要小，于是目前的最小值更新为 1。"]} />
    </div>
    <div className="absolute right-0 top-[188px] w-10 h-[21px] rounded-l bg-[#566252] text-[#dbe8d2] text-[11px] leading-[21px] font-bold pl-1 [font-family:'Liberation_Sans',sans-serif]">5</div>
  </article>
);

const Viewer = () => (
  <main className="flex-1 min-w-0 flex">
    <div className="flex-1 min-w-0 flex flex-col">
      <div className="flex-1 min-h-0 overflow-hidden grid grid-cols-[507fr_499fr] bg-[#cdddc3] text-black text-[9px] leading-[14px] [font-family:'Liberation_Serif','Noto_Sans_CJK_SC',serif]">
        <LeftPage />
        <RightPage />
      </div>
      <div className="h-[14px] shrink-0 bg-[#dedede] flex items-center justify-between px-2">
        <Svg w={5} h={7}><path d="M4.5 0v7L.5 3.5z" fill="#777" stroke="none" /></Svg>
        <div className="flex-1 ml-[9px] mr-[13px] h-[14px] rounded-full bg-[#f4f4f4] border border-[#a9a9a9]" />
        <Svg w={5} h={7}><path d="M.5 0v7l4-3.5z" fill="#777" stroke="none" /></Svg>
      </div>
    </div>
    <div className="w-[14px] bg-[#dedede] shrink-0 flex flex-col items-center pt-[9px] pb-[7px]">
      <Svg w={7} h={4}><path d="M0 4h6.5L3.2.5z" fill="#777" stroke="none" /></Svg>
      <div className="mt-[151px] mb-auto w-[14px] h-11 rounded-full bg-[#f4f4f4] border border-[#a9a9a9]" />
      <Caret />
    </div>
  </main>
);

/* ---------- status bar ---------- */

const StatusBar = () => (
  <footer className="flex items-center h-[29px] shrink-0 bg-[#e8e8e8] border-t border-[#d4d4d4] px-[10px]">
    <IconButton label="侧边栏"><Svg w={15} h={14}><path d="M1 1h13v12H1zM1 4.5h13" /></Svg></IconButton>
    <Sep className="h-6 mx-[10px]" />
    <IconButton label="第一页"><Svg w={11} h={12} className="text-[#8a93a8]"><path d="M1 1v10M10 1 5 6l5 5" /></Svg></IconButton>
    <IconButton label="上一页"><Chevron dir="left" /></IconButton>
    <PageBox className="w-[110px] h-[21px] mx-[10px]" />
    <IconButton label="下一页"><Chevron dir="right" /></IconButton>
    <IconButton label="最后一页"><Svg w={11} h={12} className="text-[#8a93a8]"><path d="M10 1v10M1 1l5 5-5 5" /></Svg></IconButton>
    <Sep className="h-6 mx-[10px]" />
    <IconButton label="后退">
      <Svg w={14} h={15} className="text-[#4f5f86]"><path d="M1 1h9l3 3v10H1zM10 7.5H4.5M6.8 5 4.3 7.5l2.5 2.5" /></Svg>
    </IconButton>
    <IconButton label="前进">
      <Svg w={14} h={15} className="text-[#b4b4b4]"><path d="M1 1h9l3 3v10H1zM4 7.5h5.5M7.2 5l2.5 2.5L7.2 10" /></Svg>
    </IconButton>

    <div className="ml-auto flex items-center">
      <IconButton label="护眼模式" active>
        <Svg w={16} h={16}>
          <path d="M1 10.5C3.5 6.5 12.5 6.5 15 10.5 12.5 15 3.5 15 1 10.5zM8 .5v4M2.5 2 5 5M13.5 2 11 5" />
          <circle cx="8" cy="10.5" r="3" /><circle cx="8" cy="10.5" r="1" />
        </Svg>
      </IconButton>
      <Sep className="h-6 mx-[10px]" />
      <div className="flex gap-[2px]">
        <IconButton label="连续" active><Continuous /></IconButton>
        <IconButton label="单页"><Svg w={14} h={16}><path d="M1 1h9l3 3v11H1zM10 1v3h3" /></Svg></IconButton>
        <IconButton label="双页" active><DoublePage plain /></IconButton>
      </div>
      <Sep className="h-6 mx-[10px]" />
      <IconButton label="播放">
        <Svg w={16} h={16}><rect width="16" height="16" rx="1" fill="#cc4545" stroke="none" /><path d="M6 4v8l5.5-4z" fill="#fff" stroke="none" /></Svg>
      </IconButton>
      <Sep className="h-6 mx-[10px]" />
      <div className="flex gap-[2px]">
        <IconButton label="实际大小"><FitIcon kind="actual" color="#333" /></IconButton>
        <IconButton label="适合页面"><FitIcon kind="page" color="#333" /></IconButton>
        <IconButton label="适合宽度"><FitIcon kind="width" color="#333" /></IconButton>
      </div>
      <Sep className="h-6 mx-[10px]" />
      <div className="relative w-10 text-[#666]">
        <select aria-label="缩放比例" className="appearance-none w-full bg-transparent text-xs">
          <option>69%</option>
        </select>
        <span className="absolute right-[3px] top-[7px] pointer-events-none"><Caret /></span>
      </div>
      <IconButton label="缩小"><Svg w={12} h={12}><path d="M0 6h12" strokeWidth="1.8" /></Svg></IconButton>
      <div className="relative w-[138px] h-5 mx-[5px] flex items-center">
        <span className="absolute left-[68px] top-[7px] w-px h-[6px] bg-[#8c8c8c]" />
        <input
          type="range"
          aria-label="缩放滑块"
          defaultValue={33}
          className="relative appearance-none w-full h-px bg-[#8c8c8c] [&::-webkit-slider-thumb]:appearance-none [&::-webkit-slider-thumb]:size-3 [&::-webkit-slider-thumb]:rounded-full [&::-webkit-slider-thumb]:bg-[#f4f4f4] [&::-webkit-slider-thumb]:border [&::-webkit-slider-thumb]:border-[#555]"
        />
      </div>
      <IconButton label="放大"><Svg w={12} h={12}><path d="M0 6h12M6 0v12" strokeWidth="1.8" /></Svg></IconButton>
      <IconButton label="全屏">
        <Svg w={15} h={15}><path d="M1 5V1h4M10 1h4v4M14 10v4h-4M5 14H1v-4M9 6l4.5-4.5M6 9l-4.5 4.5" /></Svg>
      </IconButton>
    </div>
  </footer>
);

export default function App() {
  return (
    <div className="relative h-screen flex flex-col overflow-hidden bg-[#f4f4f4] text-[#333] text-xs [font-family:'Open_Sans','Noto_Sans_CJK_SC',sans-serif]">
      <TitleBar />
      <MenuRow />
      <Toolbar />
      <div className="flex flex-1 min-h-0 border-t border-[#d5d9d0]">
        <Rail />
        <Sidebar />
        <Viewer />
      </div>
      <StatusBar />

      {/* red pointer to the open document tab */}
      <svg className="absolute left-[324px] top-[26px] pointer-events-none" width="46" height="70" viewBox="0 0 46 70">
        <path d="M1 1 18 11l-5 3 30 53L8 18l-4 5z" fill="#fb3a3a" />
      </svg>
    </div>
  );
}
